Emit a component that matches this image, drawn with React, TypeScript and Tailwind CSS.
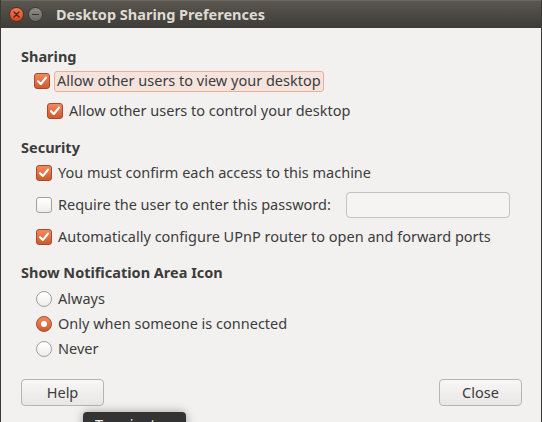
import React from "react";

const font = { fontFamily: '"Noto Sans", "Open Sans", sans-serif' };

function Check({ checked }: { checked: boolean }) {
  if (checked) {
    return (
      <div className="w-[16px] h-[16px] rounded-[3px] border border-[#a9472a] bg-gradient-to-b from-[#f08b5e] to-[#cf5a2e] flex items-center justify-center shrink-0">
        <svg width="12" height="12" viewBox="0 0 12 12">
          <path d="M2 6.2 L4.8 9 L10 2.6" fill="none" stroke="#ffffff" strokeWidth="2.1" strokeLinecap="round" strokeLinejoin="round" />
        </svg>
      </div>
    );
  }
  return (
    <div className="w-[16px] h-[16px] rounded-[3px] border border-[#a4a19c] bg-gradient-to-b from-[#ffffff] to-[#eeedec] shrink-0" />
  );
}

function Radio({ checked }: { checked: boolean }) {
  if (checked) {
    return (
      <div className="w-[16px] h-[16px] rounded-full border border-[#ad4b28] bg-gradient-to-b from-[#f08b5e] to-[#cf5a2e] flex items-center justify-center shrink-0">
        <div className="w-[6px] h-[6px] rounded-full bg-white" />
      </div>
    );
  }
  return (
    <div className="w-[16px] h-[16px] rounded-full border border-[#a4a19c] bg-gradient-to-b from-[#ffffff] to-[#eeedec] shrink-0" />
  );
}

export default function App() {
  return (
    <div className="relative w-[542px] h-[422px] overflow-hidden bg-[#f2f1f0] text-[#3c3c3c] text-[14.5px]" style={font}>
      {/* Window frame */}
      <div className="flex flex-col h-full border-l border-r border-[#3a3935]">
        {/* Title bar */}
        <div className="h-[28px] shrink-0 flex items-center bg-gradient-to-b from-[#5a5751] to-[#3e3c37] border-t border-[#6b6862]">
          <div className="flex items-center gap-[4px] pl-[8px]">
            <div className="w-[15px] h-[15px] rounded-full bg-gradient-to-b from-[#f47a52] to-[#d9441a] border border-[#5a2a18] flex items-center justify-center">
              <svg width="7" height="7" viewBox="0 0 7 7">
                <path d="M1 1 L6 6 M6 1 L1 6" stroke="#3a2a22" strokeWidth="1.3" strokeLinecap="round" />
              </svg>
            </div>
            <div className="w-[15px] h-[15px] rounded-full bg-gradient-to-b from-[#8f8c86] to-[#6c6a65] border border-[#3a3935] flex items-center justify-center">
              <div className="w-[7px] h-[1.5px] bg-[#35332f]" />
            </div>
          </div>
          <div className="ml-[13px] font-bold text-[14.5px] text-[#dfdbd2]">Desktop Sharing Preferences</div>
        </div>

        {/* Body */}
        <div className="flex flex-col pl-[20px] pr-[19px] pt-[19px]">
          <div className="h-[20px] flex items-center font-bold">Sharing</div>
          <div className="h-[28px] flex items-center pl-[13px]">
            <Check checked />
            <div className="ml-[4px] px-[2px] h-[21px] flex items-center rounded-[3px] border border-[#eeae95] bg-[#f5e4dd]">
              Allow other users to view your desktop
            </div>
          </div>
          <div className="h-[32px] flex items-center pl-[26px]">
            <Check checked />
            <span className="ml-[6px]">Allow other users to control your desktop</span>
          </div>

          <div className="h-[20px] mt-[11px] flex items-center font-bold">Security</div>
          <div className="h-[30px] flex items-center pl-[15px]">
            <Check checked />
            <span className="ml-[6px]">You must confirm each access to this machine</span>
          </div>
          <div className="h-[34px] flex items-center pl-[15px]">
            <Check checked={false} />
            <span className="ml-[6px]">Require the user to enter this password:</span>
            <div className="ml-auto mr-[12px] w-[164px] h-[26px] rounded-[4px] border border-[#c5c2bf] bg-[#f5f4f3]" />
          </div>
          <div className="h-[30px] flex items-center pl-[15px]">
            <Check checked />
            <span className="ml-[6px]">Automatically configure UPnP router to open and forward ports</span>
          </div>

          <div className="h-[20px] mt-[11px] flex items-center font-bold">Show Notification Area Icon</div>
          <div className="mt-[3px] h-[25px] flex items-center pl-[15px]">
            <Radio checked={false} />
            <span className="ml-[6px]">Always</span>
          </div>
          <div className="h-[25px] flex items-center pl-[15px]">
            <Radio checked />
            <span className="ml-[6px]">Only when someone is connected</span>
          </div>
          <div className="h-[25px] flex items-center pl-[15px]">
            <Radio checked={false} />
            <span className="ml-[6px]">Never</span>
          </div>

          <div className="mt-[18px] flex justify-between items-center">
            <button className="w-[83px] h-[27px] rounded-[4px] border border-[#b8b5b1] bg-gradient-to-b from-[#f8f7f6] to-[#e9e7e5] flex items-center justify-center text-[#3c3c3c]">
              Help
            </button>
            <button className="w-[83px] h-[27px] rounded-[4px] border border-[#b8b5b1] bg-gradient-to-b from-[#f8f7f6] to-[#e9e7e5] flex items-center justify-center text-[#3c3c3c]">
              Close
            </button>
          </div>
        </div>
      </div>

      {/* Tooltip overlay */}
      <div className="absolute left-[83px] top-[412px] w-[103px] h-[30px] rounded-[4px] bg-[#333333] shadow-[0_0_10px_rgba(0,0,0,0.35)] text-[#f2f2f2] pl-[12px] pt-[2px] leading-[20px]">
        Terminator
      </div>
    </div>
  );
}
